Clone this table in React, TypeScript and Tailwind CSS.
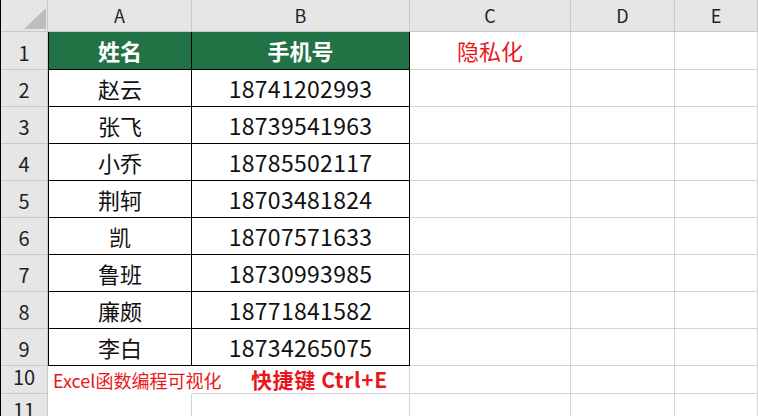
const FONT = { fontFamily: '"Noto Sans CJK SC", "Noto Sans", sans-serif' };

const people = [
  ['赵云', '18741202993'],
  ['张飞', '18739541963'],
  ['小乔', '18785502117'],
  ['荆轲', '18703481824'],
  ['凯', '18707571633'],
  ['鲁班', '18730993985'],
  ['廉颇', '18771841582'],
  ['李白', '18734265075'],
];

const cols = ['A', 'B', 'C', 'D', 'E'];

function RowHead({ n, h }: { n: number; h: string }) {
  return (
    <div className={`flex items-end justify-center ${h} bg-[#e6e6e6] border-r border-b border-[#c8c8c8] text-[20px] leading-none text-[#222] pb-[6px]`}>
      {n}
    </div>
  );
}

function Blank({ h }: { h: string }) {
  return <div className={`${h} border-r border-b border-[#d4d4d4]`} />;
}

export default function App() {
  return (
    <div style={FONT} className="w-[758px] h-[416px] overflow-hidden bg-white border-l border-black">
      <div className="grid grid-cols-[47px_144px_218px_161px_104px_83px]">
        {/* column headers */}
        <div className="relative h-[32px] bg-[#e6e6e6] border-r border-b border-[#c8c8c8]">
          <svg className="absolute left-[23px] top-[8px]" width="22" height="21" viewBox="0 0 22 21">
            <polygon points="22,0 22,21 0,21" fill="#bdbdbd" />
          </svg>
        </div>
        {cols.map((c) => (
          <div
            key={c}
            className="flex items-center justify-center h-[32px] bg-[#e6e6e6] border-r border-b border-[#c8c8c8] text-[18px] text-[#222]"
          >
            {c}
          </div>
        ))}

        {/* row 1: header of table */}
        <RowHead n={1} h="h-[38px]" />
        <div className="flex items-center justify-center h-[38px] bg-[#217346] border-l border-r border-b border-black text-white text-[22px] font-bold">
          姓名
        </div>
        <div className="flex items-center justify-center h-[38px] bg-[#217346] border-r border-b border-black text-white text-[22px] font-bold">
          手机号
        </div>
        <div className="flex items-center justify-center h-[38px] border-r border-b border-[#d4d4d4] text-[22px] text-[#e8171d]">
          隐私化
        </div>
        <Blank h="h-[38px]" />
        <Blank h="h-[38px]" />

        {/* data rows */}
        {people.map(([name, phone], i) => (
          <div key={phone} className="contents">
            <RowHead n={i + 2} h="h-[37px]" />
            <div className="flex items-center justify-center h-[37px] border-l border-r border-b border-black text-[22px] text-[#111]">
              {name}
            </div>
            <div className="flex items-center justify-center h-[37px] border-r border-b border-black text-[23px] text-[#111] tracking-[0.3px]">
              {phone}
            </div>
            <Blank h="h-[37px]" />
            <Blank h="h-[37px]" />
            <Blank h="h-[37px]" />
          </div>
        ))}

        {/* row 10 */}
        <RowHead n={10} h="h-[28px]" />
        <div className="relative h-[28px] border-r border-b border-transparent">
          <span className="absolute left-[5px] top-[1px] whitespace-nowrap text-[18px] text-[#e8171d]">
            Excel函数编程可视化
          </span>
        </div>
        <div className="flex items-center h-[28px] pl-[59px] border-r border-b border-[#d4d4d4] text-[21px] font-bold text-[#e8171d] whitespace-nowrap tracking-[0.6px]">
          快捷键 Ctrl+E
        </div>
        <Blank h="h-[28px]" />
        <Blank h="h-[28px]" />
        <Blank h="h-[28px]" />

        {/* row 11 */}
        <div className="flex justify-center h-[30px] bg-[#e6e6e6] border-r border-[#c8c8c8] text-[20px] leading-none text-[#222] pt-[6px]">
          11
        </div>
        <Blank h="h-[30px]" />
        <Blank h="h-[30px]" />
        <Blank h="h-[30px]" />
        <Blank h="h-[30px]" />
        <Blank h="h-[30px]" />
      </div>
    </div>
  );
}
